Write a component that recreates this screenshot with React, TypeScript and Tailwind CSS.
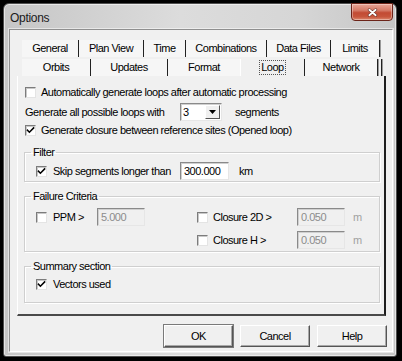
import React from "react";

const ui = "font-['Liberation_Sans',Arial,sans-serif] text-[11px] tracking-[-0.5px] text-black";

function Check({ checked = false }: { checked?: boolean }) {
  return (
    <span className="relative inline-block w-[11px] h-[11px] shrink-0 bg-white border border-t-[#7c7c7c] border-l-[#7c7c7c] border-r-[#e4e4e4] border-b-[#e4e4e4] shadow-[inset_1px_1px_0_#c8c8c8]">
      {checked && (
        <svg viewBox="0 0 9 9" className="absolute left-0 top-0 w-[9px] h-[9px]">
          <path d="M1.5 4.2 L3.4 6.2 L7.6 2" fill="none" stroke="#000" strokeWidth="1.6" strokeLinecap="square" />
        </svg>
      )}
    </span>
  );
}

function Edit({ value, w, disabled = false }: { value: string; w: string; disabled?: boolean }) {
  return (
    <span
      className={
        "flex h-[18px] items-center pl-[3px] border border-t-[#8a8a8a] border-l-[#8a8a8a] border-r-[#e6e6e6] border-b-[#e6e6e6] shadow-[inset_1px_1px_0_#d0d0d0] " +
        w +
        (disabled ? " bg-[#f0f0f0] text-[#8c8c8c]" : " bg-white")
      }
    >
      {value}
    </span>
  );
}

function Btn({ label, def = false }: { label: string; def?: boolean }) {
  return (
    <div
      className={
        "flex h-[22px] items-center justify-center bg-[#f0f0f0] border-t border-l border-r border-b border-t-white border-l-white border-r-[#555] border-b-[#555] shadow-[inset_-1px_-1px_0_#a8a8a8] " +
        (def ? "w-[69px] outline outline-1 outline-[#7a7a7a]" : "w-[70px]")
      }
    >
      {label}
    </div>
  );
}

// unselected tab: text centred, separator on the right
function Tab({ label, w, sel = false }: { label: string; w: string; sel?: boolean }) {
  return (
    <div
      className={
        "flex h-full items-center justify-center border-r border-r-[#222] shadow-[1px_0_0_#9a9a9a] " +
        w +
        (sel ? " bg-[#f0f0f0] border-l border-l-white" : " bg-[#f6f6f6]")
      }
    >
      {sel ? <span className="px-[1px] leading-[13px] outline outline-1 outline-dotted outline-[#555]">{label}</span> : label}
    </div>
  );
}

export default function App() {
  return (
    <div className={"w-[402px] h-[361px] bg-black pt-[3px] pl-[3px] " + ui}>
      <div className="w-[394px] h-[354px] rounded-t-[6px] rounded-b-[3px] border border-[#4e4e4e] bg-[linear-gradient(90deg,#c6c6c6_0%,#dcdcdc_45%,#d6d6d6_75%,#c6c6c6_100%)] shadow-[inset_0_0_0_1px_rgba(255,255,255,0.55)] flex flex-col">
        {/* title bar */}
        <div className="h-[25px] flex items-start justify-between">
          <span className="ml-[6px] mt-[5px] font-['Liberation_Sans',Arial,sans-serif] text-[12px] tracking-[-0.3px] text-[#1a1a1a]">Options</span>
          <div className="-mt-[1px] mr-[3px] w-[42px] h-[18px] rounded-b-[4px] border border-[#6b2318] bg-[linear-gradient(180deg,#e8a596_0%,#d47a66_40%,#c24b33_55%,#c7563c_80%,#dc8a6f_100%)] shadow-[inset_0_0_0_1px_rgba(255,255,255,0.35)] flex items-center justify-center">
            <svg viewBox="0 0 12 10" className="w-[11px] h-[9px]">
              <path d="M2.5 2 L9.5 8 M9.5 2 L2.5 8" stroke="#6a3228" strokeWidth="3.4" strokeLinecap="round" />
              <path d="M2.5 2 L9.5 8 M9.5 2 L2.5 8" stroke="#fff" strokeWidth="2" strokeLinecap="round" />
            </svg>
          </div>
        </div>

        {/* client area */}
        <div className="ml-[5px] w-[384px] h-[323px] bg-[#f0f0f0] border border-[#8f8f8f] border-b-white border-r-white shadow-[0_0_0_1px_rgba(255,255,255,0.5)] flex flex-col">
          {/* tab control */}
          <div className="ml-[7px] mt-[8px] w-[369px] flex flex-col">
            <div className="h-[19px] pl-[5px] flex items-stretch">
              <div className="flex w-[358px] pt-[2px]">
                <Tab label="General" w="w-[57px]" />
                <Tab label="Plan View" w="w-[65px]" />
                <Tab label="Time" w="w-[42px]" />
                <Tab label="Combinations" w="w-[81px]" />
                <Tab label="Data Files" w="w-[64px]" />
                <Tab label="Limits" w="w-[49px]" />
              </div>
            </div>
            <div className="h-[19px] pl-[5px] flex items-stretch">
              <div className="flex w-[363px] pt-[2px]">
                <Tab label="Orbits" w="w-[69px]" />
                <Tab label="Updates" w="w-[77px]" />
                <div className="flex w-[72px] h-full items-center justify-center bg-[#f6f6f6]">Format</div>
                <Tab label="Loop" w="w-[65px]" sel />
                <Tab label="Network" w="w-[73px]" />
                <div className="w-[4px] h-full border-r border-r-[#222] shadow-[1px_0_0_#9a9a9a]" />
              </div>
            </div>

            {/* panel */}
            <div className="w-[369px] h-[240px] border-l border-l-white border-r-2 border-r-[#1e1e1e] border-b-2 border-b-[#4a4a4a] pl-[7px] flex flex-col">
              <div className="mt-[9px] h-[14px] flex items-center gap-[5px]">
                <Check />
                <span>Automatically generate loops after automatic processing</span>
              </div>
              <div className="mt-[4px] h-[18px] flex items-center">
                <span className="w-[155px]">Generate all possible loops with</span>
                <span className="flex w-[42px] h-[18px] items-center justify-between bg-white border border-t-[#8a8a8a] border-l-[#8a8a8a] border-r-[#e6e6e6] border-b-[#e6e6e6] shadow-[inset_1px_1px_0_#d0d0d0]">
                  <span className="pl-[2px]">3</span>
                  <span className="mr-[1px] w-[15px] h-[14px] flex items-center justify-center bg-[#f0f0f0] border border-t-white border-l-white border-r-[#555] border-b-[#555]">
                    <svg viewBox="0 0 7 4" className="w-[7px] h-[4px]">
                      <path d="M0 0 H7 L3.5 4 Z" fill="#000" />
                    </svg>
                  </span>
                </span>
                <span className="ml-[13px]">segments</span>
              </div>
              <div className="mt-[2px] h-[14px] flex items-center gap-[5px]">
                <Check checked />
                <span>Generate closure between reference sites (Opened loop)</span>
              </div>

              <fieldset className="mt-[9px] ml-[-1px] w-[356px] border border-[#cfcfcf] shadow-[1px_1px_0_#fff,inset_1px_1px_0_#fff] px-0 pt-[4px] pb-[1px]">
                <legend className="ml-[6px] px-[2px] leading-[12px]">Filter</legend>
                <div className="h-[18px] pl-[11px] flex items-center">
                  <Check checked />
                  <span className="ml-[6px] w-[127px]">Skip segments longer than</span>
                  <Edit value="300.000" w="w-[49px]" />
                  <span className="ml-[10px]">km</span>
                </div>
              </fieldset>

              <fieldset className="mt-[8px] ml-[-1px] w-[356px] border border-[#cfcfcf] shadow-[1px_1px_0_#fff,inset_1px_1px_0_#fff] px-0 pt-[6px] pb-[2px]">
                <legend className="ml-[6px] px-[2px] leading-[12px]">Failure Criteria</legend>
                <div className="h-[18px] pl-[11px] flex items-center">
                  <Check />
                  <span className="ml-[6px] w-[44px]">PPM &gt;</span>
                  <Edit value="5.000" w="w-[48px]" disabled />
                  <span className="w-[52px]" />
                  <Check />
                  <span className="ml-[5px] w-[84px]">Closure 2D &gt;</span>
                  <Edit value="0.050" w="w-[48px]" disabled />
                  <span className="ml-[8px] text-[#a0a0a0]">m</span>
                </div>
                <div className="mt-[5px] h-[18px] pl-[172px] flex items-center">
                  <Check />
                  <span className="ml-[5px] w-[84px]">Closure H &gt;</span>
                  <Edit value="0.050" w="w-[48px]" disabled />
                  <span className="ml-[8px] text-[#a0a0a0]">m</span>
                </div>
              </fieldset>

              <fieldset className="mt-[8px] ml-[-1px] w-[356px] border border-[#cfcfcf] shadow-[1px_1px_0_#fff,inset_1px_1px_0_#fff] px-0 pt-[5px] pb-[11px]">
                <legend className="ml-[6px] px-[2px] leading-[12px]">Summary section</legend>
                <div className="h-[14px] pl-[11px] flex items-center">
                  <Check checked />
                  <span className="ml-[6px]">Vectors used</span>
                </div>
              </fieldset>
            </div>
          </div>

          {/* buttons */}
          <div className="mt-[9px] mr-[5px] flex justify-end gap-[7px]">
            <Btn label="OK" def />
            <Btn label="Cancel" />
            <Btn label="Help" />
          </div>
        </div>
      </div>
    </div>
  );
}
